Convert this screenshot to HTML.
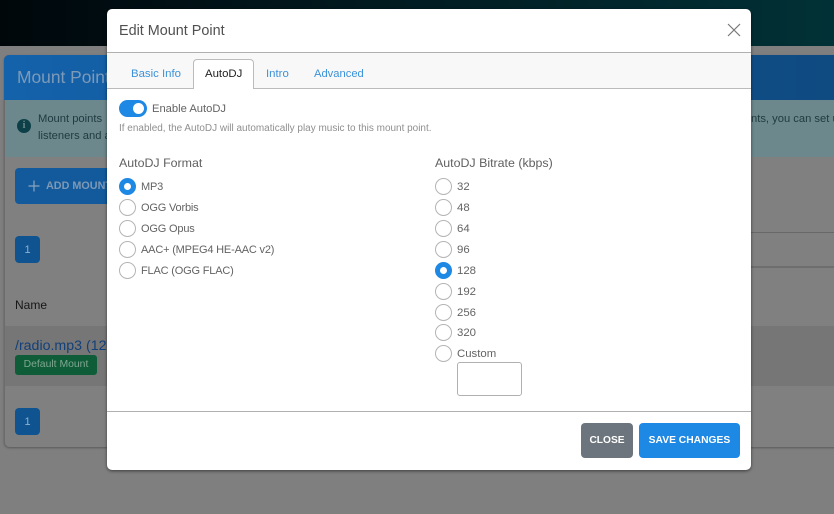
<!DOCTYPE html>
<html lang="en">
<head>
<meta charset="utf-8">
<title>Edit Mount Point</title>
<style>
html,body{margin:0;padding:0;width:834px;height:514px;overflow:hidden;background:#7f7f7f;font-family:"Liberation Sans",sans-serif;}
#w{position:absolute;left:0;top:0;width:834px;height:514px;overflow:hidden;background:#7f7f7f;filter:blur(.3px);}
.a{position:absolute;white-space:nowrap;}
.t{position:absolute;white-space:nowrap;line-height:16px;}
.r{position:absolute;width:17px;height:17px;box-sizing:border-box;border:1px solid #b4b4b4;border-radius:50%;background:#fff;}
.r.on{border:5px solid #1e88e5;}
.l{position:absolute;white-space:nowrap;font-size:11.4px;line-height:16px;color:#636363;margin-top:1px;}
.f{font-size:11px;letter-spacing:-.18px;}
</style>
</head>
<body>
<div id="w">
<!-- background page -->
<div class="a" style="left:0;top:0;width:834px;height:46px;background:linear-gradient(90deg,#00070b 0%,#011c22 50%,#013136 100%);"></div>
<div class="a" style="left:4px;top:55px;width:840px;height:392px;background:#808080;border-radius:5px;box-shadow:0 1px 2px rgba(0,0,0,.3);border-left:1px solid #6c6c6c;box-sizing:border-box;"></div>
<div class="a" style="left:4px;top:55px;width:840px;height:45px;background:linear-gradient(90deg,#1462ab 0%,#0f4a80 100%);border-radius:5px 5px 0 0;"></div>
<div class="t" style="left:17px;top:66px;font-size:17.4px;line-height:22px;color:#7d9ab8;">Mount Points</div>
<div class="a" style="left:5px;top:100px;width:830px;height:57px;background:#6c888c;"></div>
<div class="a" style="left:17px;top:119px;width:14px;height:14px;border-radius:50%;background:#0c3f47;color:#6c888c;font:bold 10px/14px 'Liberation Serif',serif;text-align:center;">i</div>
<div class="t" style="left:38px;top:111px;font-size:11.2px;color:#1f3a40;">Mount points</div>
<div class="t" style="left:38px;top:128px;font-size:11.2px;color:#1f3a40;">listeners and a</div>
<div class="t" style="left:751px;top:111px;font-size:11.2px;color:#1f3a40;">nts, you can set u</div>
<div class="a" style="left:15px;top:168px;width:110px;height:36px;background:#125a9c;border-radius:4px;"></div>
<svg class="a" style="left:28px;top:180px;" width="12" height="12" viewBox="0 0 12 12"><path d="M6 0.5 V11.5 M0.5 6 H11.5" stroke="#8aa3bd" stroke-width="1.2" fill="none"/></svg>
<div class="t" style="left:46px;top:178px;font-size:10.8px;font-weight:bold;color:#7d99b6;">ADD MOUNT</div>
<div class="a" style="left:15px;top:236px;width:25px;height:27px;background:#0f5490;border-radius:4px;color:#8fb0cf;font-size:11px;line-height:28px;text-align:center;">1</div>
<div class="a" style="left:107px;top:232px;width:730px;height:1px;background:#686868;"></div>
<div class="a" style="left:107px;top:266px;width:730px;height:2px;background:#6e6e6e;"></div>
<div class="t" style="left:15px;top:297px;font-size:12px;color:#161616;">Name</div>
<div class="a" style="left:5px;top:326px;width:830px;height:60px;background:#767676;"></div>
<div class="t" style="left:15px;top:337px;font-size:14.2px;line-height:18px;color:#12407a;">/radio.mp3 (12</div>
<div class="a" style="left:15px;top:355px;width:82px;height:20px;background:#0f5c38;border-radius:3px;color:#7fa792;font-size:10.4px;line-height:19px;text-align:center;">Default Mount</div>
<div class="a" style="left:15px;top:408px;width:25px;height:27px;background:#0f5490;border-radius:4px;color:#8fb0cf;font-size:11px;line-height:28px;text-align:center;">1</div>

<!-- modal -->
<div class="a" style="left:107px;top:9px;width:644px;height:461px;background:#fff;border-radius:5px;box-shadow:0 1px 3px rgba(0,0,0,.55);"></div>
<div class="t" style="left:119px;top:22px;font-size:14.4px;line-height:19px;color:#505050;">Edit Mount Point</div>
<svg class="a" style="left:727px;top:23px;" width="14" height="14" viewBox="0 0 14 14"><path d="M1 1 L13 13 M13 1 L1 13" stroke="#777" stroke-width="1.2" fill="none"/></svg>
<div class="a" style="left:107px;top:52px;width:644px;height:1px;background:#b0b0b0;"></div>
<div class="a" style="left:107px;top:53px;width:644px;height:35px;background:#f8f8f8;"></div>
<div class="a" style="left:107px;top:88px;width:644px;height:1px;background:#bbb;"></div>
<div class="a" style="left:193px;top:59px;width:61px;height:30px;box-sizing:border-box;background:#fff;border:1px solid #bbb;border-bottom:0;border-radius:4px 4px 0 0;"></div>
<div class="t" style="left:131px;top:66px;font-size:11.4px;color:#3c92d8;">Basic Info</div>
<div class="t" style="left:205px;top:66px;font-size:11.4px;color:#222;">AutoDJ</div>
<div class="t" style="left:266px;top:66px;font-size:11.4px;color:#3c92d8;">Intro</div>
<div class="t" style="left:314px;top:66px;font-size:11.2px;color:#3c92d8;">Advanced</div>

<div class="a" style="left:119px;top:100px;width:28px;height:17px;background:#1e88e5;border-radius:9px;"></div>
<div class="a" style="left:133px;top:103px;width:11px;height:11px;background:#fff;border-radius:50%;"></div>
<div class="t" style="left:152px;top:101px;font-size:11.2px;color:#636363;">Enable AutoDJ</div>
<div class="t" style="left:119px;top:121px;font-size:9.98px;color:#8f8f8f;">If enabled, the AutoDJ will automatically play music to this mount point.</div>

<div class="t" style="left:119px;top:155px;font-size:12.4px;color:#606060;">AutoDJ Format</div>
<div class="r on" style="left:119px;top:178px;"></div><div class="l f" style="left:141px;top:178px;">MP3</div>
<div class="r" style="left:119px;top:199px;"></div><div class="l f" style="left:141px;top:199px;">OGG Vorbis</div>
<div class="r" style="left:119px;top:220px;"></div><div class="l f" style="left:141px;top:220px;">OGG Opus</div>
<div class="r" style="left:119px;top:241px;"></div><div class="l f" style="left:141px;top:241px;">AAC+ (MPEG4 HE-AAC v2)</div>
<div class="r" style="left:119px;top:262px;"></div><div class="l f" style="left:141px;top:262px;">FLAC (OGG FLAC)</div>

<div class="t" style="left:435px;top:155px;font-size:12.4px;color:#606060;">AutoDJ Bitrate (kbps)</div>
<div class="r" style="left:435px;top:178px;"></div><div class="l" style="left:457px;top:178px;">32</div>
<div class="r" style="left:435px;top:199px;"></div><div class="l" style="left:457px;top:199px;">48</div>
<div class="r" style="left:435px;top:220px;"></div><div class="l" style="left:457px;top:220px;">64</div>
<div class="r" style="left:435px;top:241px;"></div><div class="l" style="left:457px;top:241px;">96</div>
<div class="r on" style="left:435px;top:262px;"></div><div class="l" style="left:457px;top:262px;">128</div>
<div class="r" style="left:435px;top:283px;"></div><div class="l" style="left:457px;top:283px;">192</div>
<div class="r" style="left:435px;top:304px;"></div><div class="l" style="left:457px;top:304px;">256</div>
<div class="r" style="left:435px;top:324px;"></div><div class="l" style="left:457px;top:324px;">320</div>
<div class="r" style="left:435px;top:345px;"></div><div class="l" style="left:457px;top:345px;">Custom</div>
<div class="a" style="left:457px;top:362px;width:65px;height:34px;box-sizing:border-box;border:1px solid #b0b0b0;border-radius:3px;background:#fff;"></div>

<div class="a" style="left:107px;top:411px;width:644px;height:1px;background:#b0b0b0;"></div>
<div class="a" style="left:581px;top:423px;width:52px;height:35px;background:#6c757d;border-radius:4px;color:#fff;font-size:10.2px;font-weight:bold;line-height:35px;text-align:center;">CLOSE</div>
<div class="a" style="left:639px;top:423px;width:101px;height:35px;background:#1e88e5;border-radius:4px;color:#fff;font-size:10.3px;font-weight:bold;line-height:35px;text-align:center;">SAVE CHANGES</div>
</div>
</body>
</html>
